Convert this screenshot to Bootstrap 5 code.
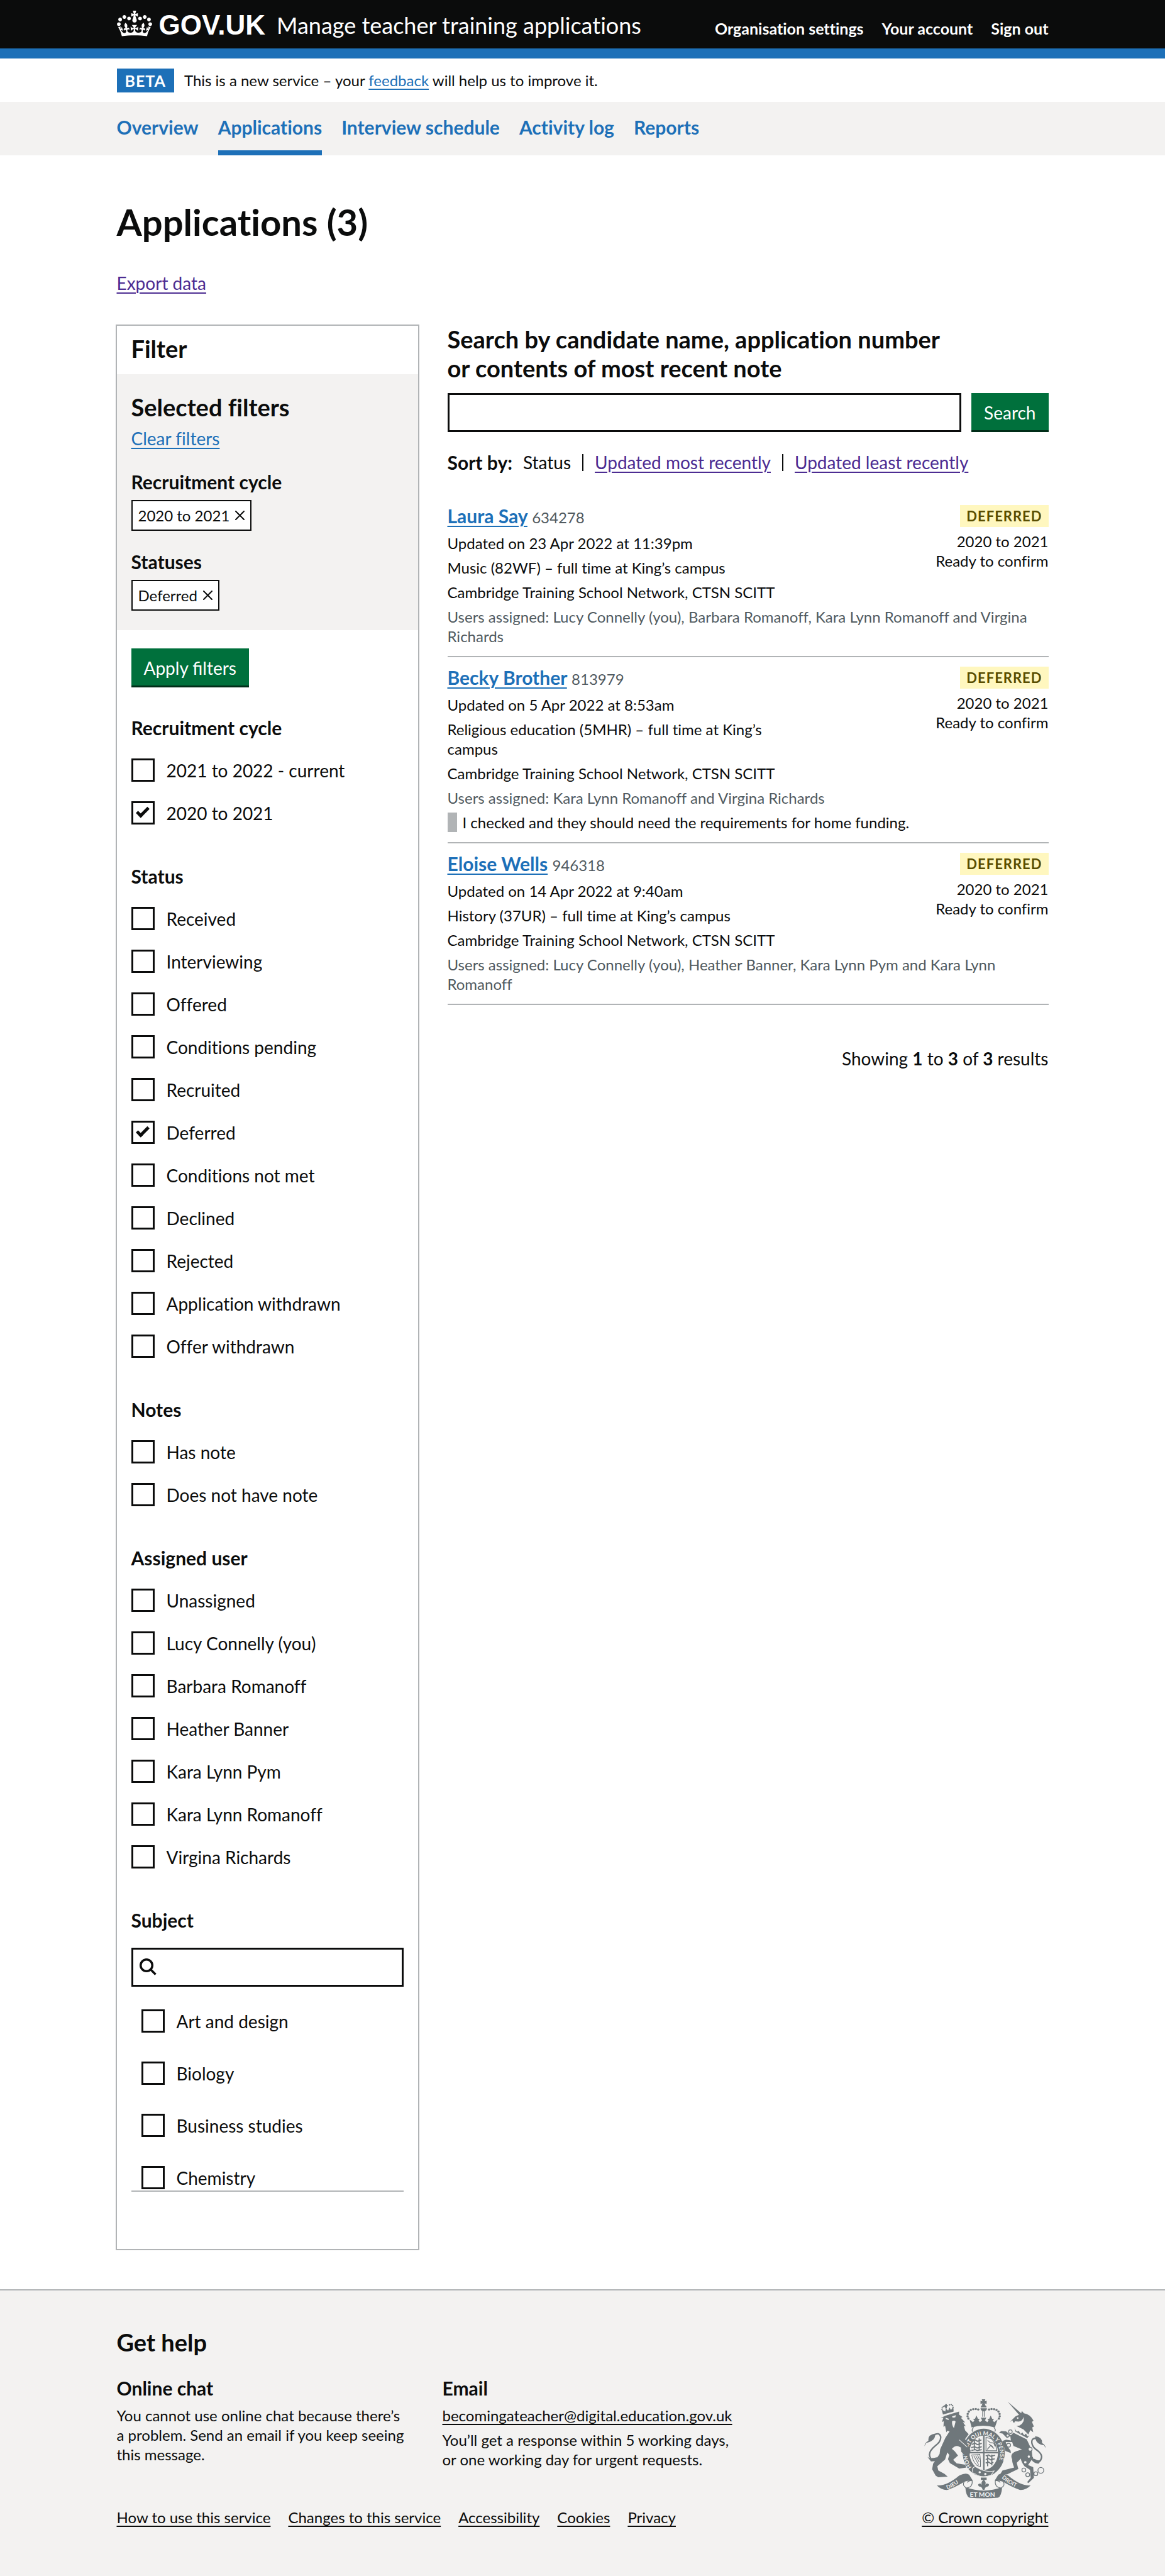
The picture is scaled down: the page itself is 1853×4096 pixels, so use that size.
<!DOCTYPE html>
<html lang="en">
<head>
<meta charset="utf-8">
<meta name="viewport" content="width=device-width, initial-scale=1">
<title>Applications (3) - Manage teacher training applications</title>
<link rel="stylesheet" href="https://cdn.jsdelivr.net/npm/bootstrap@5.3.0/dist/css/bootstrap.min.css">
<style>
:root{--ink:#0b0c0c;--blue:#1d70b8;--visited:#4c2c92;--grey:#f3f2f1;--line:#b1b4b6;--muted:#505a5f;--green:#00703c;--fs-s:24px;--fs-m:28px;--fs-mb:30px;--fs-l:38px}
body{font-family:Lato,"Liberation Sans",sans-serif;font-size:var(--fs-m);line-height:39px;color:var(--ink);background:var(--grey);font-variant-ligatures:no-common-ligatures}
p,h1,h2,h3,ul,legend,fieldset{margin:0}
a{color:var(--blue);text-decoration-thickness:2px;text-underline-offset:4px}
a.seen{color:var(--visited)}
.wrap{max-width:1482px;margin:0 auto}
.fs-s{font-size:var(--fs-s);line-height:31px}
.fs-m{font-size:var(--fs-mb);line-height:39px;font-weight:700}
.fs-l{font-size:var(--fs-l);line-height:46px;font-weight:700}
.top-bar{background:var(--ink);border-bottom:16px solid var(--blue)}
.top-bar .wrap{height:77px;padding-top:17px}
.top-bar a{color:#fff;text-decoration:none}
.logo-text{font:700 44px/46px "Liberation Sans",sans-serif;margin:0 18px 0 11px}
.service-name{font-size:36px;line-height:46px}
.account{gap:29px;padding-top:13px;font-size:25px;line-height:31px}
.phase{height:69px}
.phase-tag{background:var(--blue);color:#fff;font-size:25px;letter-spacing:1px;line-height:38px;padding:0 13px}
.section-nav{background:var(--grey)}
.section-nav .wrap{gap:31px}
.section-nav a{height:85px;padding-top:21px;font-size:var(--fs-mb);font-weight:700;text-decoration:none;border-bottom:8px solid transparent}
.section-nav a.active{border-bottom-color:var(--blue)}
.page-title{font-size:58px;line-height:62px;font-weight:700;padding-top:75px;margin-bottom:47px}
.columns{gap:47px;padding:46px 0 64px}
.filter-panel{width:479px;flex:none;margin-top:2px;padding-bottom:91px;box-shadow:0 0 0 2px var(--line)}
.panel-pad{padding-left:23px;padding-right:23px}
.panel-title{padding-top:13px;padding-bottom:18px}
.chosen{background:var(--grey);padding-top:29px;padding-bottom:31px}
.chosen h3{margin:30px 0 9px}
.filter-tag{display:inline-flex;align-items:center;gap:9px;height:49px;padding:0 9px;border:2px solid var(--ink);background:#fff;color:var(--ink);text-decoration:none}
.go-btn{background:var(--green);color:#fff;border:0;border-radius:0;box-shadow:inset 0 -3px 0 #002d18;height:62px;padding:0 20px}
.apply{margin:29px 0 45px}
.group-title{font-size:var(--fs-mb);line-height:39px;font-weight:700;margin-bottom:29px}
.group{margin-bottom:32px}
.tick-row{display:flex;gap:19px;height:37px;margin-bottom:31px}
.tick{appearance:none;flex:none;width:37px;height:37px;margin:0;border:3px solid var(--ink);background:#fff;display:grid;place-items:center}
.tick:checked::after{content:"";width:20px;height:11px;margin-top:-6px;border:solid var(--ink);border-width:0 0 5px 5px;transform:rotate(-45deg)}
.subject-title{margin-bottom:24px}
.subject-box{border:3px solid var(--ink);height:62px;padding:0 9px}
.subject-box input{border:0;outline:0;min-width:0}
.subject-list{height:326px;overflow:hidden;border-bottom:2px solid var(--line);padding:36px 16px 0}
.subject-list .tick-row{margin-bottom:46px}
.search-row{gap:16px;margin:17px 0 35px}
.text-box{height:62px;border:3px solid var(--ink);border-radius:0;min-width:0}
.sort-row{line-height:27px;gap:17px;margin-bottom:39px}
.sort-row strong{font-size:var(--fs-mb)}
.sort-row li+li{border-left:2px solid var(--ink);padding-left:18px;margin-left:18px}
.result{padding:13px 0 16px;border-bottom:2px solid var(--line)}
.stack{display:flex;flex-direction:column;gap:8px}
.course{width:60%}
.muted{color:var(--muted)}
.status-tag{background:#fff7bf;color:#594d00;font-size:22px;line-height:35px;font-weight:700;letter-spacing:1px;padding:0 10px;margin:2px 0 7px}
.note{border-left:15px solid var(--line);padding-left:9px}
.showing{margin-top:66px}
footer{border-top:2px solid var(--line);padding:59px 0 78px}
footer a{color:var(--ink)}
.help{gap:48px;margin-top:31px}
.help-col{width:470px}
.foot-links{gap:28px;margin-top:61px}
.crest{gap:14px}
</style>
<script src="https://cdn.jsdelivr.net/npm/bootstrap@5.3.0/dist/js/bootstrap.bundle.min.js"></script>
</head>
<body>
<header class="top-bar">
  <div class="wrap d-flex justify-content-between">
    <a href="#" class="d-flex">
      <svg width="56" height="41" viewBox="0 0 132 97" fill="currentColor" fill-rule="evenodd" aria-hidden="true"><path d="M25 30.2c3.5 1.5 7.7-.2 9.1-3.7 1.5-3.6-.2-7.8-3.9-9.2-3.6-1.4-7.6.3-9.1 3.9-1.4 3.5.3 7.5 3.9 9zM9 39.5c3.6 1.5 7.8-.2 9.2-3.7 1.5-3.6-.2-7.8-3.9-9.1-3.6-1.5-7.6.2-9.1 3.8-1.4 3.5.3 7.5 3.8 9zM4.4 57.2c3.5 1.5 7.7-.2 9.1-3.8 1.5-3.6-.2-7.7-3.9-9.1-3.5-1.5-7.6.3-9.1 3.8-1.4 3.5.3 7.6 3.9 9.1zm38.3-21.4c3.5 1.5 7.7-.2 9.1-3.8 1.5-3.6-.2-7.7-3.9-9.1-3.6-1.5-7.6.3-9.1 3.8-1.3 3.6.4 7.7 3.9 9.1zm64.4-5.6c-3.6 1.5-7.8-.2-9.1-3.7-1.5-3.6.2-7.8 3.8-9.2 3.6-1.4 7.7.3 9.2 3.9 1.3 3.5-.4 7.5-3.9 9zm15.9 9.3c-3.6 1.5-7.7-.2-9.1-3.7-1.5-3.6.2-7.8 3.7-9.1 3.6-1.5 7.7.2 9.2 3.8 1.5 3.5-.3 7.5-3.8 9zm4.7 17.7c-3.6 1.5-7.8-.2-9.2-3.8-1.5-3.6.2-7.7 3.9-9.1 3.6-1.5 7.7.3 9.2 3.8 1.3 3.5-.4 7.6-3.9 9.1zM89.3 35.8c-3.6 1.5-7.8-.2-9.2-3.8-1.4-3.6.2-7.7 3.9-9.1 3.6-1.5 7.7.3 9.2 3.8 1.4 3.6-.3 7.7-3.9 9.1zM69.7 17.7l8.9 4.7V9.3l-8.9 2.8c-.2-.3-.5-.6-.9-.9L72.4 0H59.6l3.5 11.2c-.3.3-.6.5-.9.9l-8.8-2.8v13.1l8.8-4.7c.3.3.6.7.9.9l-5 15.4v.1c-.2.8-.4 1.6-.4 2.4 0 4.1 3.1 7.5 7 8.1h.2c.3 0 .7.1 1 .1.4 0 .7 0 1-.1h.2c4-.6 7.1-4.1 7.1-8.1 0-.8-.1-1.7-.4-2.4V34l-5.1-15.4c.4-.2.7-.6 1-.9zM66 92.8c16.9 0 32.8 1.1 47.1 3.2 4-16.9 8.9-26.7 14-33.5l-9.6-3.4c1 4.9 1.1 7.2 0 10.2-1.5-1.4-3-4.3-4.2-8.7L108.6 76c2.8-2 5-3.2 7.5-3.3-4.4 9.4-10 11.9-13.6 11.2-4.3-.8-6.3-4.6-5.6-7.9 1-4.7 5.7-5.9 8-.5 4.3-8.7-3-11.4-7.6-8.8 7.1-7.2 7.9-13.5 2.1-21.1-8 6.1-8.1 12.3-4.5 20.8-4.7-5.4-12.1-2.5-9.5 6.2 3.4-5.2 7.9-2 7.2 3.1-.6 4.3-6.4 7.8-13.5 7.2-10.3-.9-10.9-8-11.2-13.8 2.5-.5 7.1 1.8 11 7.3L80.2 60c-4.1 4.4-8 5.3-12.3 5.4 1.4-4.4 8-11.6 8-11.6H55.5s6.4 7.2 7.9 11.6c-4.2-.1-8-1-12.3-5.4l1.4 16.4c3.9-5.5 8.5-7.7 10.9-7.3-.3 5.8-.9 12.8-11.1 13.8-7.2.6-12.9-2.9-13.5-7.2-.7-5 3.8-8.3 7.1-3.1 2.7-8.7-4.6-11.6-9.4-6.2 3.7-8.5 3.6-14.7-4.6-20.8-5.8 7.6-5 13.9 2.2 21.1-4.7-2.6-11.9.1-7.7 8.8 2.3-5.5 7.1-4.2 8.1.5.7 3.3-1.3 7.1-5.7 7.9-3.5.7-9-1.8-13.5-11.2 2.5.1 4.7 1.3 7.5 3.3l-4.7-15.4c-1.2 4.4-2.7 7.2-4.3 8.7-1.1-3-.9-5.3 0-10.2l-9.5 3.4c5 6.9 9.9 16.7 14 33.5 14.8-2.1 30.8-3.2 47.7-3.2z"/></svg>
      <span class="logo-text">GOV.UK</span>
      <span class="service-name">Manage teacher training applications</span>
    </a>
    <nav class="account d-flex fw-bold" aria-label="Account"><a href="#">Organisation settings</a><a href="#">Your account</a><a href="#">Sign out</a></nav>
  </div>
</header>
<div class="phase bg-white">
  <div class="wrap h-100 d-flex align-items-center gap-3 fs-s"><strong class="phase-tag">BETA</strong><span>This is a new service – your <a href="#">feedback</a> will help us to improve it.</span></div>
</div>
<nav class="section-nav" aria-label="Sections">
  <div class="wrap d-flex"><a href="#">Overview</a><a href="#" class="active" aria-current="page">Applications</a><a href="#">Interview schedule</a><a href="#">Activity log</a><a href="#">Reports</a></div>
</nav>
<div class="bg-white">
<main class="wrap">
  <h1 class="page-title">Applications (3)</h1>
  <p><a href="#" class="seen">Export data</a></p>
  <div class="columns d-flex align-items-start">
    <form class="filter-panel">
      <h2 class="panel-title panel-pad fs-l">Filter</h2>
      <div class="chosen panel-pad">
        <h2 class="fs-l mb-2">Selected filters</h2>
        <p><a href="#">Clear filters</a></p>
        <h3 class="fs-m">Recruitment cycle</h3>
        <a href="#" class="filter-tag fs-s">2020 to 2021 <svg width="15" height="15" viewBox="0 0 15 15" stroke="currentColor" stroke-width="2" stroke-linecap="round" aria-hidden="true"><path d="M1 1l13 13M14 1L1 14"/></svg></a>
        <h3 class="fs-m">Statuses</h3>
        <a href="#" class="filter-tag fs-s">Deferred <svg width="15" height="15" viewBox="0 0 15 15" stroke="currentColor" stroke-width="2" stroke-linecap="round" aria-hidden="true"><path d="M1 1l13 13M14 1L1 14"/></svg></a>
      </div>
      <div class="panel-pad">
        <button type="submit" class="go-btn apply d-block">Apply filters</button>
        <fieldset class="group">
          <legend class="group-title">Recruitment cycle</legend>
          <div class="tick-row"><input class="tick" type="checkbox" id="c1"><label for="c1">2021 to 2022 - current</label></div>
          <div class="tick-row"><input class="tick" type="checkbox" id="c2" checked><label for="c2">2020 to 2021</label></div>
        </fieldset>
        <fieldset class="group">
          <legend class="group-title">Status</legend>
          <div class="tick-row"><input class="tick" type="checkbox" id="s1"><label for="s1">Received</label></div>
          <div class="tick-row"><input class="tick" type="checkbox" id="s2"><label for="s2">Interviewing</label></div>
          <div class="tick-row"><input class="tick" type="checkbox" id="s3"><label for="s3">Offered</label></div>
          <div class="tick-row"><input class="tick" type="checkbox" id="s4"><label for="s4">Conditions pending</label></div>
          <div class="tick-row"><input class="tick" type="checkbox" id="s5"><label for="s5">Recruited</label></div>
          <div class="tick-row"><input class="tick" type="checkbox" id="s6" checked><label for="s6">Deferred</label></div>
          <div class="tick-row"><input class="tick" type="checkbox" id="s7"><label for="s7">Conditions not met</label></div>
          <div class="tick-row"><input class="tick" type="checkbox" id="s8"><label for="s8">Declined</label></div>
          <div class="tick-row"><input class="tick" type="checkbox" id="s9"><label for="s9">Rejected</label></div>
          <div class="tick-row"><input class="tick" type="checkbox" id="s10"><label for="s10">Application withdrawn</label></div>
          <div class="tick-row"><input class="tick" type="checkbox" id="s11"><label for="s11">Offer withdrawn</label></div>
        </fieldset>
        <fieldset class="group">
          <legend class="group-title">Notes</legend>
          <div class="tick-row"><input class="tick" type="checkbox" id="n1"><label for="n1">Has note</label></div>
          <div class="tick-row"><input class="tick" type="checkbox" id="n2"><label for="n2">Does not have note</label></div>
        </fieldset>
        <fieldset class="group">
          <legend class="group-title">Assigned user</legend>
          <div class="tick-row"><input class="tick" type="checkbox" id="u1"><label for="u1">Unassigned</label></div>
          <div class="tick-row"><input class="tick" type="checkbox" id="u2"><label for="u2">Lucy Connelly (you)</label></div>
          <div class="tick-row"><input class="tick" type="checkbox" id="u3"><label for="u3">Barbara Romanoff</label></div>
          <div class="tick-row"><input class="tick" type="checkbox" id="u4"><label for="u4">Heather Banner</label></div>
          <div class="tick-row"><input class="tick" type="checkbox" id="u5"><label for="u5">Kara Lynn Pym</label></div>
          <div class="tick-row"><input class="tick" type="checkbox" id="u6"><label for="u6">Kara Lynn Romanoff</label></div>
          <div class="tick-row"><input class="tick" type="checkbox" id="u7"><label for="u7">Virgina Richards</label></div>
        </fieldset>
        <fieldset>
          <legend class="group-title subject-title">Subject</legend>
          <div class="subject-box d-flex align-items-center">
            <svg width="28" height="28" viewBox="0 0 28 28" fill="none" stroke="currentColor" stroke-width="3.5" class="flex-shrink-0" aria-hidden="true"><circle cx="12" cy="11" r="9.3"/><path d="M18.500 17.500l8 8"/></svg>
            <input type="search" class="flex-fill" aria-label="Search subjects">
          </div>
          <div class="subject-list">
            <div class="tick-row"><input class="tick" type="checkbox" id="j1"><label for="j1">Art and design</label></div>
            <div class="tick-row"><input class="tick" type="checkbox" id="j2"><label for="j2">Biology</label></div>
            <div class="tick-row"><input class="tick" type="checkbox" id="j3"><label for="j3">Business studies</label></div>
            <div class="tick-row"><input class="tick" type="checkbox" id="j4"><label for="j4">Chemistry</label></div>
          </div>
        </fieldset>
      </div>
    </form>
    <section class="flex-fill">
      <form>
        <label for="q" class="fs-l d-block">Search by candidate name, application number<br>or contents of most recent note</label>
        <div class="search-row d-flex"><input type="search" id="q" class="text-box flex-fill"><button type="submit" class="go-btn">Search</button></div>
      </form>
      <div class="sort-row d-flex"><strong>Sort by:</strong>
        <ul class="list-unstyled d-flex"><li>Status</li><li><a href="#" class="seen">Updated most recently</a></li><li><a href="#" class="seen">Updated least recently</a></li></ul>
      </div>
      <article class="result fs-s stack">
        <div class="d-flex justify-content-between">
          <div class="stack course">
            <h3 class="fs-m"><a href="#">Laura Say</a> <span class="fs-s fw-normal muted">634278</span></h3>
            <p>Updated on 23 Apr 2022 at 11:39pm</p><p>Music (82WF) – full time at King’s campus</p><p>Cambridge Training School Network, CTSN SCITT</p>
          </div>
          <div class="d-flex flex-column align-items-end"><strong class="status-tag">DEFERRED</strong><p>2020 to 2021</p><p>Ready to confirm</p></div>
        </div>
        <p class="muted">Users assigned: Lucy Connelly (you), Barbara Romanoff, Kara Lynn Romanoff and Virgina Richards</p>
      </article>
      <article class="result fs-s stack">
        <div class="d-flex justify-content-between">
          <div class="stack course">
            <h3 class="fs-m"><a href="#">Becky Brother</a> <span class="fs-s fw-normal muted">813979</span></h3>
            <p>Updated on 5 Apr 2022 at 8:53am</p><p>Religious education (5MHR) – full time at King’s<br>campus</p><p>Cambridge Training School Network, CTSN SCITT</p>
          </div>
          <div class="d-flex flex-column align-items-end"><strong class="status-tag">DEFERRED</strong><p>2020 to 2021</p><p>Ready to confirm</p></div>
        </div>
        <p class="muted">Users assigned: Kara Lynn Romanoff and Virgina Richards</p>
        <p class="note">I checked and they should need the requirements for home funding.</p>
      </article>
      <article class="result fs-s stack">
        <div class="d-flex justify-content-between">
          <div class="stack course">
            <h3 class="fs-m"><a href="#">Eloise Wells</a> <span class="fs-s fw-normal muted">946318</span></h3>
            <p>Updated on 14 Apr 2022 at 9:40am</p><p>History (37UR) – full time at King’s campus</p><p>Cambridge Training School Network, CTSN SCITT</p>
          </div>
          <div class="d-flex flex-column align-items-end"><strong class="status-tag">DEFERRED</strong><p>2020 to 2021</p><p>Ready to confirm</p></div>
        </div>
        <p class="muted">Users assigned: Lucy Connelly (you), Heather Banner, Kara Lynn Pym and Kara Lynn<br>Romanoff</p>
      </article>
      <p class="showing text-end">Showing <b>1</b> to <b>3</b> of <b>3</b> results</p>
    </section>
  </div>
</main>
</div>
<footer>
  <div class="wrap d-flex justify-content-between align-items-end">
    <div>
      <h2 class="fs-l">Get help</h2>
      <div class="help d-flex fs-s">
        <div class="help-col"><h3 class="fs-m mb-2">Online chat</h3><p>You cannot use online chat because there’s<br>a problem. Send an email if you keep seeing<br>this message.</p></div>
        <div class="help-col"><h3 class="fs-m mb-2">Email</h3><p class="mb-2"><a href="#">becomingateacher@digital.education.gov.uk</a></p><p>You’ll get a response within 5 working days,<br>or one working day for urgent requests.</p></div>
      </div>
      <nav class="foot-links d-flex fs-s" aria-label="Footer"><a href="#">How to use this service</a><a href="#">Changes to this service</a><a href="#">Accessibility</a><a href="#">Cookies</a><a href="#">Privacy</a></nav>
    </div>
    <a href="#" class="crest d-flex flex-column align-items-center fs-s">
      <svg width="194" height="159" viewBox="130 122 754 618" fill="#6f777b" aria-hidden="true">
        <defs>
          <path id="garter" d="M424 546A101 118 0 1 1 572 546"/>
          <path id="left-scroll" d="M273 682Q330 660 384 612"/>
          <path id="right-scroll" d="M608 612Q660 660 730 682"/>
        </defs>
        <path d="M486 126h22l-4 13 12-4v20l-12-4 4 13h-22l4-13-12 4v-20l12 4z"/>
        <path d="M479 176a19 19 0 0 1 37 0zM478 181h40a20 20 0 0 1-40 0zM489 200h5v34h-5zM501 200h5v34h-5z"/>
        <g><circle cx="464" cy="189" r="7"/><circle cx="449" cy="186" r="7"/><circle cx="433" cy="187" r="7"/><circle cx="418" cy="192" r="7"/><circle cx="406" cy="202" r="7"/><circle cx="399" cy="216" r="7"/><circle cx="398" cy="231" r="7"/><circle cx="403" cy="245" r="7"/><circle cx="531" cy="189" r="7"/><circle cx="546" cy="186" r="7"/><circle cx="562" cy="187" r="7"/><circle cx="577" cy="192" r="7"/><circle cx="589" cy="202" r="7"/><circle cx="596" cy="216" r="7"/><circle cx="597" cy="231" r="7"/><circle cx="592" cy="245" r="7"/></g>
        <path d="M410 250l22 18 8-12-8-8 12-2 9-20 9 20 12 2-8 8 8 12 14-12-8-16h34l-8 16 14 12 8-12-8-8 12-2 9-20 9 20 12 2-8 8 8 12 22-18-17 50q-73-22-144 0z"/>
        <path d="M436 300q-16 14-6 26M560 300q16 14 6 26" fill="none" stroke="#6f777b" stroke-width="5"/>
        <path fill-rule="evenodd" d="M498 308a130 148 0 1 0 .1 0zM498 350a88 106 0 1 1-.1 0z"/>
        <path d="M494 350h9v212h-9zM410 451h176v9H410z"/>
        <g fill="none" stroke="#6f777b" stroke-width="7"><path d="M428 385l18-8 12 8 26-8M424 405l20-8 14 9 28-8M420 425l22-6 16 8 28-8M422 442l22-5 14 6 28-6M440 376v66M470 368v72"/><path d="M512 362v82h66q-2-46-34-76zM520 436l20-24 22 18M522 380l16 14 22 2 8 20M530 404l24 14" stroke-width="5"/><path d="M424 470l50-4q6 40 4 76l-20-6q-28-26-34-66zM436 474l30 56M448 474l22 40M460 472l12 26" stroke-width="4"/><path d="M510 476l18-6 12 8 28-6M510 498l18-6 12 8 26-6M510 520l18-6 12 8 18-6M522 470v70M548 468v66"/></g>
        <path d="M428 555q16-22 30-6 50 30 104 20l-20 26q-60 22-100-10-16 2-14-30z" stroke="#f3f2f1" stroke-width="4"/>
        <circle cx="473" cy="577" r="7" fill="#f3f2f1"/><circle cx="508" cy="588" r="7" fill="#f3f2f1"/>
        <text fill="#f3f2f1" font-family="Lato,sans-serif" font-weight="700" font-size="34"><textPath href="#garter">HONI SOIT QUI MAL Y PENSE</textPath></text>
        <path d="M238 190l8 30 66-18-2-30-14 20-10-16-8 20-14-14-4 20z"/><path d="M260 156h10v26h-10zM254 162h22v8h-22z"/>
        <g fill="none" stroke="#6f777b" stroke-width="8" stroke-dasharray="1 10" stroke-linecap="round"><path d="M240 190q-2-26 26-18M308 176q0-26-30-12"/></g>
        <path d="M232 242l28-14 44-14 42-12-1 18 22 16-10 5 26 28-14-1 18 24-12-2 8 28 22 24-22 30 20 42 14 30-10 34-22-2-26-26-2-26-16-8q-18-6-40 16l18 16 20 26-30 26 22 22 52 8 8 18-44 6-58-34-12-24 8-26-12-16-14 44-48 42 6 26 38 20 20 18-58 4-16-10-22-40 6-34 40-60 4-30 32-70 26-40-14-4-6 10-8-40-10 6 2-34-12 4 10-26z"/>
        <path d="M262 240l20 6-2 8-16-6zM302 232l24-8-4 14-16 2zM302 262q14-8 22 2l-10 40q-14-16-12-42z" fill="#f3f2f1"/>
        <path d="M346 376l50 46" stroke="#f3f2f1" stroke-width="4"/>
        <g fill="none" stroke="#6f777b" stroke-width="9"><path d="M188 348q36-22 44 10 2 30-32 54-54 44-30 78M798 482q-2 20 28 28M824 366q-34 0-28 32 4 26 36 46 42 34 10 66"/></g>
        <path d="M132 416q0-22 24-34-4-38 42-44 4 44-56 58zM150 482q14 14 58 2l14 6q-18 22-50 20zM882 428q-4-22-24-32 4-36-42-42 0 48 54 56zM858 500q-20 10-46-6l-20 2q12 26 44 28z"/>
        <path d="M646 140l88 76-16 8zM660 266l34-34 34-16 6-18 12 14q40 6 60 46l-10 8 12 28-10 6 6 30-18-14-12 28-30-32-34-16q-20-8-18-22l14-8-26 4-4-14z"/>
        <path d="M690 262l24 2q26-2 28-28 14 30-22 52l-28 4z" fill="#f3f2f1"/><circle cx="708" cy="242" r="5" fill="#f3f2f1"/>
        <path d="M688 300l4 26 76 42 14-20-14 4-8-16-12 10-10-16-12 8-10-18-14 4z" stroke="#f3f2f1" stroke-width="3"/>
        <path d="M680 332l84 42 30 64 6 54-28 40 32 14 4 66-34 32-8-6 22-26-4-50-34-22q-22-30-22-48l-26 26 10 38-70 34-42-2 14-22 72-18q-14-36-12-50-20-40 36-54l24-8-52-22-8-24-40 0 6 22 24 32 2 14-34-12-14-42-6-20 24-8 30 4-4-28-20 14-28-28-22-4 14-12 30 2 30 24 14-14z"/>
        <g fill="#f3f2f1" stroke="#6f777b" stroke-width="5"><circle cx="663" cy="326" r="11"/><circle cx="646" cy="350" r="9"/><circle cx="652" cy="410" r="12"/><circle cx="785" cy="435" r="12"/><circle cx="777" cy="480" r="10"/><circle cx="755" cy="515" r="10"/><circle cx="746" cy="563" r="12"/><circle cx="770" cy="592" r="12"/><circle cx="820" cy="586" r="12"/><circle cx="851" cy="565" r="18"/></g>
        <path d="M208 658q60 6 140-62 40-18 60-4l22 36q-38 0-52 8-54 32-102 50-36 4-68-28zM788 658q-60 6-140-62-40-18-60-4l-22 36q38 0 52 8 54 32 102 50 36 4 68-28zM384 668q114 44 228 0-4 58-26 66-88 8-176 0-22-8-26-66z"/>
        <path d="M378 634q-16 24 12 40 42-4 36-46-20 0-30 12M618 634q16 24-12 40-42-4-36-46 20 0 30 12" fill="#f3f2f1" stroke="#6f777b" stroke-width="5"/>
        <path d="M480 610h36v14h-36zM498 622q20 18 8 34 10-16 24-4 2 14-14 14l-10 8q0 12-9 12t-9-12l-10-8q-16 0-14-14 14-12 24 4-12-16 10-34z"/>
        <g fill="#f3f2f1" font-family="Lato,sans-serif" font-weight="700" font-size="34"><text><textPath href="#left-scroll">DIEU</textPath></text><text><textPath href="#right-scroll">DROIT</textPath></text><text x="412" y="728" font-size="40">ET MON</text></g>
      </svg>
      <span>© Crown copyright</span>
    </a>
  </div>
</footer>
</body>
</html>
